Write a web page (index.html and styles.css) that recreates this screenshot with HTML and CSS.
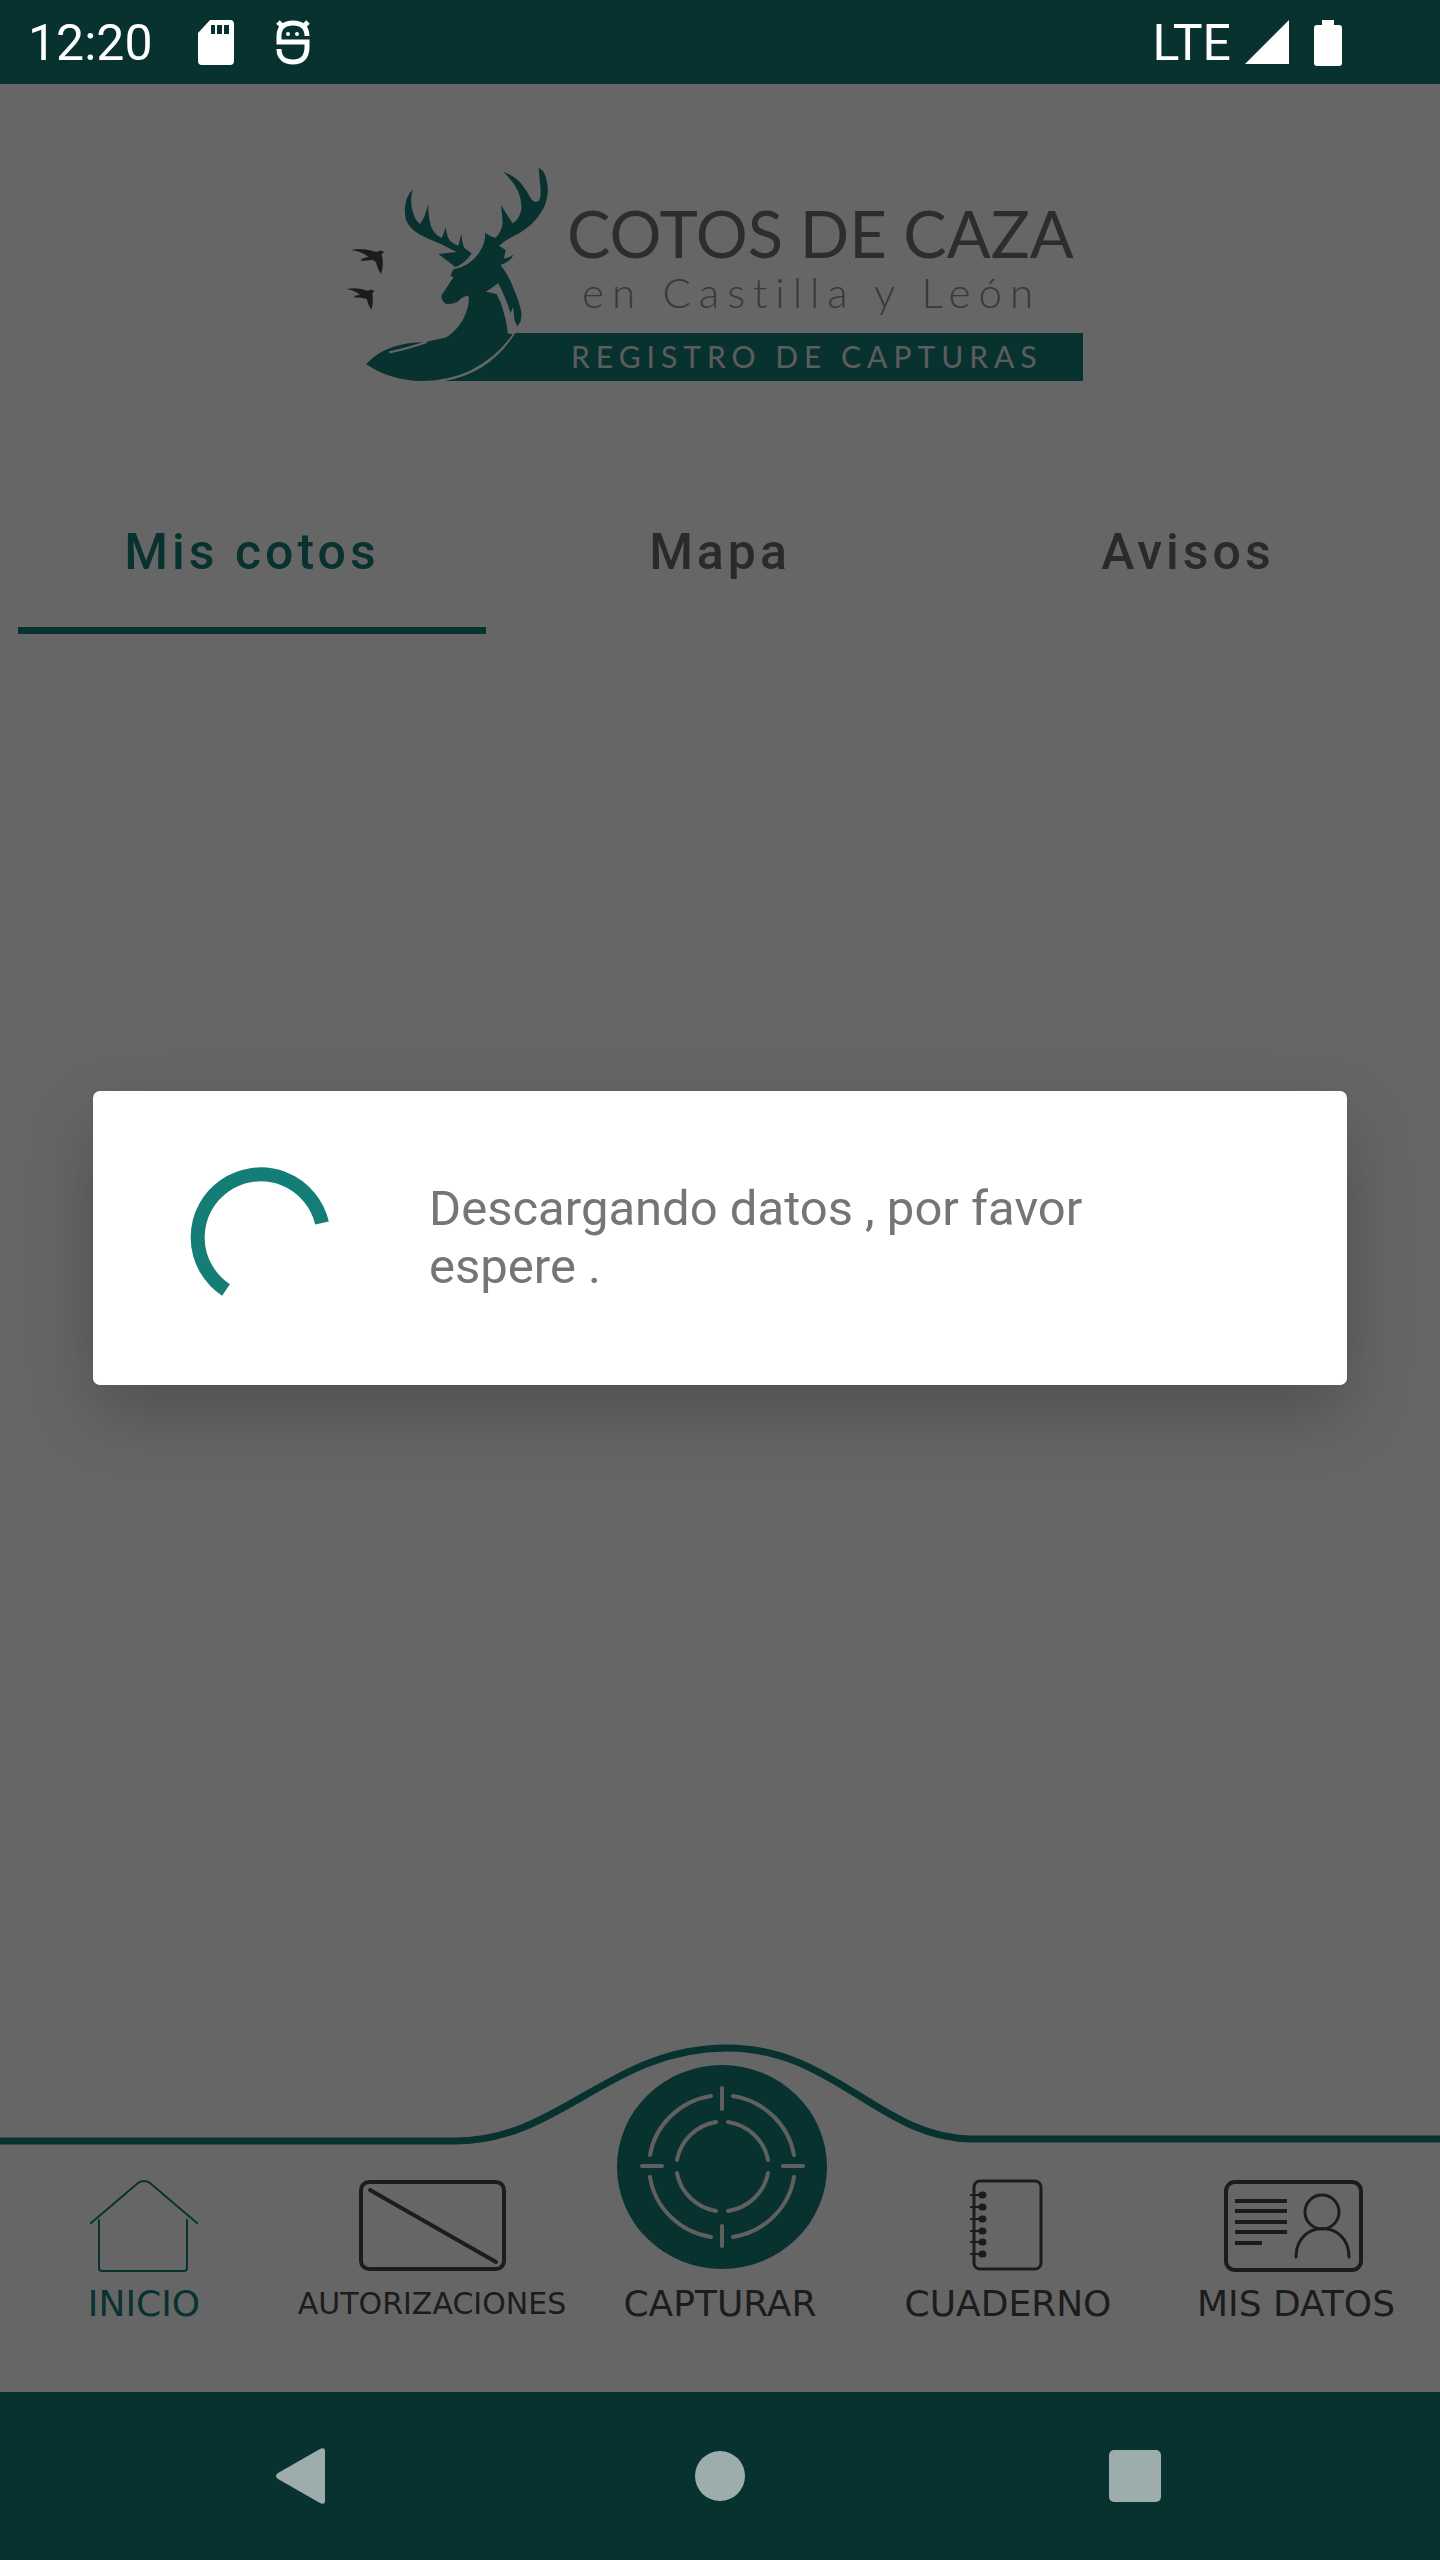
FILE: index.html
```html
<!DOCTYPE html>
<html lang="es">
  <head>
    <meta charset="UTF-8" />
    <meta name="viewport" content="width=device-width, initial-scale=1.0" />
    <title>Cotos de Caza</title>
    <link rel="stylesheet" href="styles.css">
  </head>
  <body>
    <div class="status-bar">
      <span class="time">12:20</span>
      <svg class="sd-icon" width="38" height="46" viewBox="0 0 38 46">
        <path fill="#fff" fill-rule="evenodd" d="M13 0H33Q37 0 37 4V41Q37 45 33 45H5Q1 45 1 41V13ZM14 5V14H18V5ZM20 5V14H25V5ZM27 5V14H32V5Z" />
      </svg>
      <svg width="34" height="46" viewBox="0 0 34 46">
        <path fill="none" stroke="#fff" stroke-width="5" d="M31 16C31 7 25 3 17 3S3 7 3 16V22H31V27C31 38 25 42 17 42S3 38 3 29M6 6L2 2M28 6L32 2" />
        <circle cx="12" cy="14" r="2" fill="#fff" />
        <circle cx="21" cy="14" r="2" fill="#fff" />
      </svg>
      <span class="network">LTE</span>
      <svg class="signal" width="44" height="46" viewBox="0 0 44 46">
        <path fill="#fff" d="M44 0V44H0Z" />
      </svg>
      <svg width="28" height="46" viewBox="0 0 28 46">
        <path fill="#fff" d="M8 0H20V5H25Q28 5 28 8V43Q28 46 25 46H3Q0 46 0 43V8Q0 5 3 5H8Z" />
      </svg>
    </div>

    <div class="app">
      <header class="header">
        <svg class="logo" viewBox="0 0 750 216" role="img" aria-label="Cotos de Caza en Castilla y León">
          <g transform="translate(-15 -18) scale(0.33333)">
            <!-- birds -->
            <g fill="#484848">
              <path d="M63 300Q95 293 128 303Q140 307 148 303Q156 299 162 307L155 312Q163 345 153 372Q143 358 137 335Q130 328 118 331L94 333V327L115 320Q92 303 63 300Z" />
              <path d="M48 417Q80 411 103 419Q112 424 119 420Q128 418 134 424L127 429Q131 455 124 480Q114 465 110 447Q95 441 73 443L74 437L90 434Q72 420 48 417Z" />
            </g>
            <!-- deer and banner -->
            <g fill="#137d76">
              <path d="M372 348L325 312L380 306Q335 282 290 264Q240 243 228 210Q215 155 248 118Q238 155 250 190Q256 212 270 222Q285 205 295 160Q294 200 304 232Q315 256 335 264Q344 245 347 230Q350 260 360 272Q372 283 385 287L394 251Q396 280 404 295L425 310Q408 338 375 352Z" />
              <path d="M372 358Q425 346 450 304Q468 275 465 248L485 260L497 263Q514 247 518 220Q516 190 513 164Q532 197 548 220Q566 210 574 180Q577 155 565 125Q548 90 519 65Q554 77 573 100Q592 124 604 148Q614 161 625 153Q636 144 630 100L626 54Q648 62 653 110Q656 155 632 189Q610 224 570 248Q530 268 507 287L527 300L522 326Q533 325 550 314Q544 334 512 345Q538 380 551 416Q570 460 575 492L572 514L562 530L554 512L549 470L542 490Q530 450 505 400L468 425Q495 430 500 432Q516 460 522 490Q532 525 533 550L548 553Q500 622 420 662Q355 693 270 693Q175 689 108 642Q142 606 190 590Q240 576 283 577L350 562Q395 529 408 488Q420 460 415 437Q397 439 383 455Q365 464 347 461Q332 452 335 434Q346 421 362 394L371 382L362 378Q366 362 372 358Z" />
              <path d="M556 549H2259V693H345Q480 670 556 549Z" />
            </g>
            <path fill="none" stroke="#fff" stroke-width="7" d="M178 607Q230 597 290 576" />
          </g>
          <text class="logo-title" x="222" y="90">COTOS DE CAZA</text>
          <text class="logo-place" x="237" y="140">en Castilla y León</text>
          <text class="logo-banner" x="226" y="200">REGISTRO DE CAPTURAS</text>
        </svg>
      </header>

      <div class="tabs" role="tablist">
        <button class="tab active" role="tab" aria-selected="true">Mis cotos</button>
        <button class="tab" role="tab">Mapa</button>
        <button class="tab" role="tab">Avisos</button>
      </div>

      <nav class="bottom-nav">
        <svg class="nav-curve" viewBox="0 0 1440 110" preserveAspectRatio="none">
          <path d="M0 101H455C560 101 610 8 727 8C835 8 880 99 973 99H1440" />
        </svg>
        <a class="nav-item active" href="#">
          <svg width="110" height="94" viewBox="0 0 110 94">
            <path stroke-width="2" d="M2 45L49 5Q55 1 61 5L108 45M10 42V90Q10 93 13 93H95Q98 93 98 90V42" />
          </svg>
          INICIO
        </a>
        <a class="nav-item long" href="#">
          <svg width="148" height="94" viewBox="0 0 148 94">
            <rect x="3" y="4" width="143" height="87" rx="8" stroke-width="4" />
            <path stroke-width="4" d="M12 12L138 84" />
          </svg>
          AUTORIZACIONES
        </a>
        <a class="nav-item" href="#">
          <svg width="214" height="208" viewBox="0 0 214 208">
            <ellipse class="target" cx="109" cy="103" rx="105" ry="102" />
            <g class="crosshair">
              <path d="M98 32A74 72 0 0 0 37 91M120 32A74 72 0 0 1 181 91M37 113A74 72 0 0 0 98 173M181 113A74 72 0 0 1 120 173" />
              <path d="M103 58A48 47 0 0 0 64 96M115 58A48 47 0 0 1 155 96M64 109A48 47 0 0 0 103 147M155 109A48 47 0 0 1 115 147" />
              <path d="M109 24V45M109 162V182M29 102H49M170 102H190" />
            </g>
          </svg>
          CAPTURAR
        </a>
        <a class="nav-item" href="#">
          <svg width="76" height="94" viewBox="0 0 76 94">
            <rect x="4" y="3" width="67" height="88" rx="6" stroke-width="3" />
            <path stroke-width="2" d="M0 17H14M0 29H14M0 41H14M0 53H14M0 64H14M0 76H14" />
            <path stroke-width="7" d="M12 17h1M12 29h1M12 41h1M12 53h1M12 64h1M12 76h1" />
          </svg>
          CUADERNO
        </a>
        <a class="nav-item" href="#">
          <svg width="146" height="94" viewBox="0 0 146 94">
            <rect x="3" y="4" width="135" height="88" rx="9" stroke-width="4" />
            <path class="id-lines" d="M12 23H64M12 33H64M12 44H64M12 54H64M12 65H39" />
            <ellipse cx="99" cy="34" rx="17" ry="17" stroke-width="3" />
            <path stroke-width="3" d="M73 79C73 41 126 41 126 79" />
          </svg>
          MIS DATOS
        </a>
      </nav>

      <div class="overlay">
        <div class="dialog" role="dialog" aria-modal="true" aria-labelledby="message">
          <svg class="spinner" width="168" height="168" viewBox="-84 -84 168 168">
            <path d="M-35 52A63 63 0 1 1 61 -15" />
          </svg>
          <p id="message" class="message">Descargando datos , por favor espere .</p>
        </div>
      </div>
    </div>

    <div class="system-nav">
      <button aria-label="Atrás">
        <svg width="56" height="56" viewBox="0 0 56 56"><path d="M2 25L44 1Q49 -1 49 3V53Q49 57 44 55L2 31Q-2 28 2 25Z" /></svg>
      </button>
      <button aria-label="Inicio">
        <svg width="56" height="56" viewBox="0 0 56 56"><circle cx="28" cy="28" r="25" /></svg>
      </button>
      <button aria-label="Recientes">
        <svg width="56" height="56" viewBox="0 0 56 56"><rect x="1" y="2" width="52" height="52" rx="5" /></svg>
      </button>
    </div>
  </body>
</html>
```
FILE: styles.css
```css
* {
  box-sizing: border-box;
}
body {
  margin: 0;
  min-height: 100vh;
  display: flex;
  flex-direction: column;
  font-family: Roboto, sans-serif;
  background-color: #08322f;
}
svg {
  display: block;
}
button {
  border: none;
  background: none;
  font-family: inherit;
  cursor: pointer;
}

/* status bar */
.status-bar {
  height: 84px;
  padding: 2px 98px 0 28px;
  display: flex;
  align-items: center;
  color: white;
  font-size: 50px;
}
.sd-icon {
  margin-left: 44px;
  margin-right: 41px;
}
.network {
  margin-left: auto;
}
.signal {
  margin-left: 14px;
  margin-right: 25px;
}

/* app */
.app {
  flex: 1;
  position: relative;
  display: flex;
  flex-direction: column;
  background-color: white;
}
.header {
  padding: 84px 24px 0;
}
.logo {
  width: 100%;
  max-width: 750px;
  margin: 0 auto;
}
.logo-title,
.logo-place,
.logo-banner {
  font-family: Lato, sans-serif;
}
.logo-title {
  font-size: 65px;
  fill: #707070;
}
.logo-place {
  font-size: 42px;
  font-weight: 300;
  letter-spacing: 8px;
  fill: #909090;
}
.logo-banner {
  font-size: 30px;
  letter-spacing: 6px;
  fill: #e6e6e6;
}
.tabs {
  display: flex;
  margin-top: 86px;
  padding: 0 18px;
}
.tab {
  flex: 1;
  height: 164px;
  padding: 0;
  font-size: 50px;
  font-weight: 500;
  letter-spacing: 4px;
  color: #696969;
}
.tab.active {
  color: #137d76;
  box-shadow: inset 0 -7px #137d76;
}

/* bottom navigation */
.bottom-nav {
  position: relative;
  margin-top: auto;
  padding: 24px 0 68px;
  display: grid;
  grid-template-columns: repeat(5, 1fr);
  align-items: end;
}
.nav-curve {
  position: absolute;
  top: 0;
  left: 0;
  width: 100%;
  height: 110px;
}
.nav-curve path {
  fill: none;
  stroke: #137d76;
  stroke-width: 7;
}
.nav-item {
  position: relative;
  display: flex;
  flex-direction: column;
  align-items: center;
  gap: 12px;
  color: #484848;
  font-family: "DejaVu Sans", sans-serif;
  font-size: 36px;
  line-height: 40px;
  text-decoration: none;
}
.nav-item.long {
  font-size: 30px;
}
.nav-item.active {
  color: #137d76;
}
.nav-item svg {
  fill: none;
  stroke: currentColor;
  stroke-linecap: round;
}
.nav-item .target {
  fill: #137d76;
  stroke: none;
}
.crosshair {
  stroke: #f0f0f0;
  stroke-width: 4;
}
.id-lines {
  stroke-width: 4;
  stroke-linecap: butt;
}

/* progress dialog */
.overlay {
  position: absolute;
  inset: 0;
  padding: 0 93px;
  display: flex;
  align-items: center;
  background-color: rgba(0, 0, 0, 0.6);
}
.dialog {
  width: 100%;
  padding: 63px 84px;
  display: flex;
  align-items: center;
  gap: 84px;
  background-color: white;
  border-radius: 7px;
  box-shadow: 0 28px 70px rgba(0, 0, 0, 0.22);
}
.spinner {
  flex-shrink: 0;
  fill: none;
  stroke: #137d76;
  stroke-width: 14;
}
.message {
  margin: 0;
  padding-right: 28px;
  font-size: 49px;
  line-height: 58px;
  color: #757575;
}

/* system buttons */
.system-nav {
  height: 168px;
  padding: 0 96px;
  display: grid;
  grid-template-columns: repeat(3, 1fr);
  align-items: center;
}
.system-nav button {
  display: flex;
  justify-content: center;
}
.system-nav svg {
  fill: #9dadab;
}
```
